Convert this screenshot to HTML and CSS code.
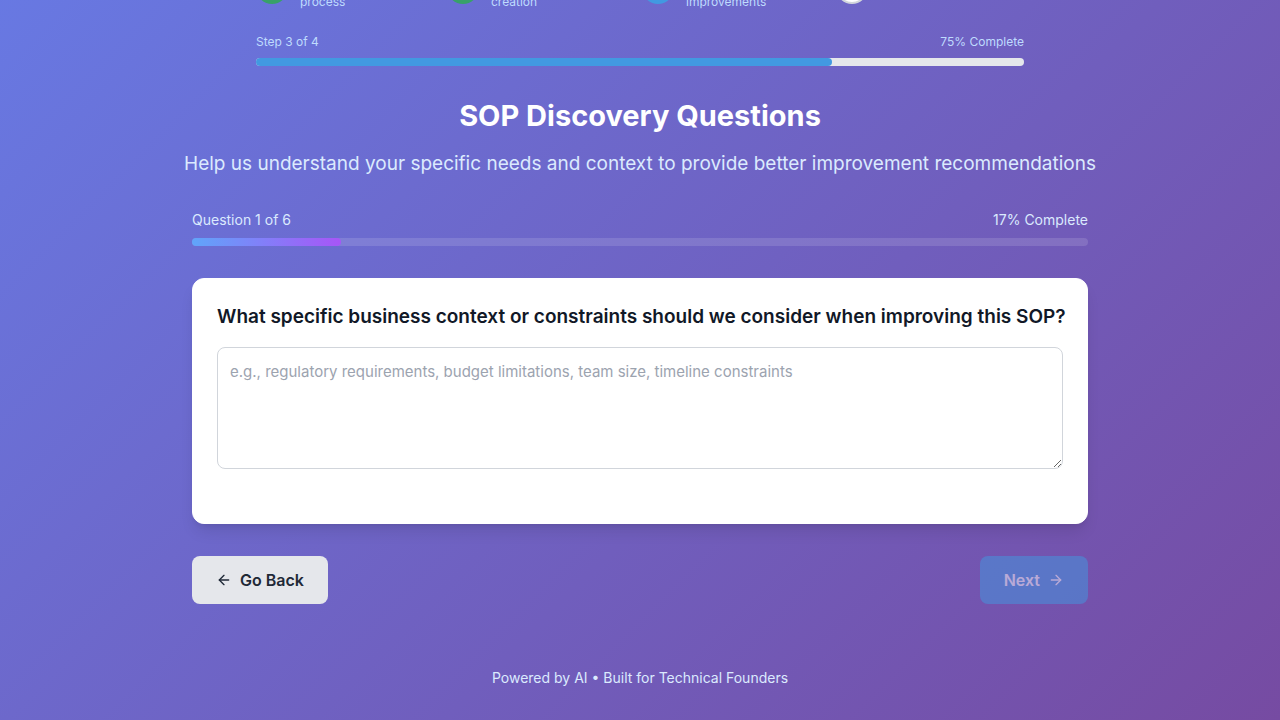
FILE: index.html
```html
<!DOCTYPE html>
<html lang="en">
<head>
<meta charset="utf-8">
<meta name="viewport" content="width=device-width, initial-scale=1">
<title>SOP Discovery Questions</title>
<link rel="stylesheet" href="styles.css">
</head>
<body>
<header class="progress">
  <ol class="steps">
    <li class="step"><span class="dot dot-done"></span><span>process</span></li>
    <li class="step"><span class="dot dot-done"></span><span>creation</span></li>
    <li class="step"><span class="dot dot-current"></span><span>improvements</span></li>
    <li class="step"><span class="dot dot-next"></span></li>
  </ol>
  <div class="progress-labels"><span>Step 3 of 4</span><span>75% Complete</span></div>
  <div class="bar bar-steps"><div class="fill fill-steps" style="width: 75%"></div></div>
</header>
<main class="content">
  <h1 class="title">SOP Discovery Questions</h1>
  <p class="subtitle">Help us understand your specific needs and context to provide better improvement recommendations</p>
  <div class="question-labels"><span>Question 1 of 6</span><span>17% Complete</span></div>
  <div class="bar bar-questions"><div class="fill fill-questions" style="width: 16.67%"></div></div>
  <section class="card">
    <label class="question" for="answer">What specific business context or constraints should we consider when improving this SOP?</label>
    <textarea class="answer" id="answer" placeholder="e.g., regulatory requirements, budget limitations, team size, timeline constraints"></textarea>
  </section>
  <div class="actions">
    <button class="button button-back" type="button">
      <svg class="icon" viewBox="0 0 24 24" aria-hidden="true"><path d="m12 19-7-7 7-7"/><path d="M19 12H5"/></svg>
      Go Back
    </button>
    <button class="button button-next" type="button" disabled>
      Next
      <svg class="icon" viewBox="0 0 24 24" aria-hidden="true"><path d="M5 12h14"/><path d="m12 5 7 7-7 7"/></svg>
    </button>
  </div>
</main>
<footer class="footer">Powered by AI • Built for Technical Founders</footer>
</body>
</html>
```

FILE: styles.css
```css
* {
  box-sizing: border-box;
}

body {
  display: flow-root;
  margin: 0;
  min-height: 100vh;
  background: linear-gradient(135deg, #667eea 0%, #764ba2 100%) bottom / 100% calc(100% + 240px) no-repeat;
  color: #dbeafe;
  font-family: Inter, "Liberation Sans", sans-serif;
  font-size: 16px;
  line-height: 24px;
}

.progress {
  max-width: 768px;
  margin: -28px auto 32px;
  color: #bfdbfe;
  font-size: 12px;
  line-height: 16px;
}

.steps {
  display: grid;
  grid-template-columns: 191fr 195fr 194fr 188fr;
  margin: 0 0 24px;
  padding: 0;
  list-style: none;
}

.step {
  display: flex;
  align-items: flex-end;
  gap: 12px;
}

.dot {
  width: 32px;
  height: 32px;
  margin-bottom: 6px;
  border: 2px solid;
  border-radius: 50%;
}

.dot-done {
  border-color: #38a169;
  background: #38a169;
}

.dot-current {
  border-color: #4299e1;
  background: #4299e1;
}

.dot-next {
  border-color: #d1d5db;
  background: #fff;
}

.progress-labels,
.question-labels {
  display: flex;
  justify-content: space-between;
  margin-bottom: 8px;
}

.question-labels {
  font-size: 14px;
  line-height: 20px;
}

.bar {
  height: 8px;
  border-radius: 4px;
}

.bar-steps {
  background: #e5e7eb;
}

.bar-questions {
  margin-bottom: 32px;
  background: rgba(255, 255, 255, 0.13);
}

.fill {
  height: 100%;
  border-radius: 4px;
}

.fill-steps {
  background: #4299e1;
}

.fill-questions {
  background: linear-gradient(90deg, #60a5fa, #a855f7);
}

.content {
  max-width: 896px;
  margin: 0 auto;
}

.title {
  margin: 0 0 16px;
  color: #fff;
  font-size: 29px;
  font-weight: 700;
  line-height: 36px;
  text-align: center;
}

.subtitle {
  margin: 0 -16px 32px;
  font-size: 19px;
  line-height: 28px;
  text-align: center;
}

.card {
  margin-bottom: 32px;
  padding: 24px 24px 54px;
  border: 1px solid #fff;
  border-radius: 12px;
  background: #fff;
  box-shadow: 0 10px 15px -3px rgba(0, 0, 0, 0.1), 0 4px 6px -4px rgba(0, 0, 0, 0.1);
}

.question {
  display: block;
  margin: 0 -8px 16px 0;
  color: #111827;
  font-size: 19px;
  font-weight: 600;
  line-height: 28px;
}

.answer {
  display: block;
  width: 100%;
  height: 122px;
  padding: 12px;
  border: 1px solid #d1d5db;
  border-radius: 8px;
  background: #fff;
  color: #111827;
  font: inherit;
  font-size: 15px;
  resize: vertical;
}

.answer::placeholder {
  color: #9ca3af;
}

.actions {
  display: flex;
  justify-content: space-between;
  margin-bottom: 64px;
}

.button {
  display: flex;
  align-items: center;
  gap: 8px;
  padding: 12px 24px;
  border: 0;
  border-radius: 8px;
  font: inherit;
  font-weight: 600;
}

.button-back {
  background: #e5e7eb;
  color: #1f2937;
}

.button-next {
  background: #4299e1;
  color: #fff;
  opacity: 0.5;
}

.icon {
  width: 16px;
  height: 16px;
  fill: none;
  stroke: currentColor;
  stroke-width: 2;
  stroke-linecap: round;
  stroke-linejoin: round;
}

.footer {
  padding-bottom: 32px;
  font-size: 14px;
  line-height: 20px;
  text-align: center;
}
```
